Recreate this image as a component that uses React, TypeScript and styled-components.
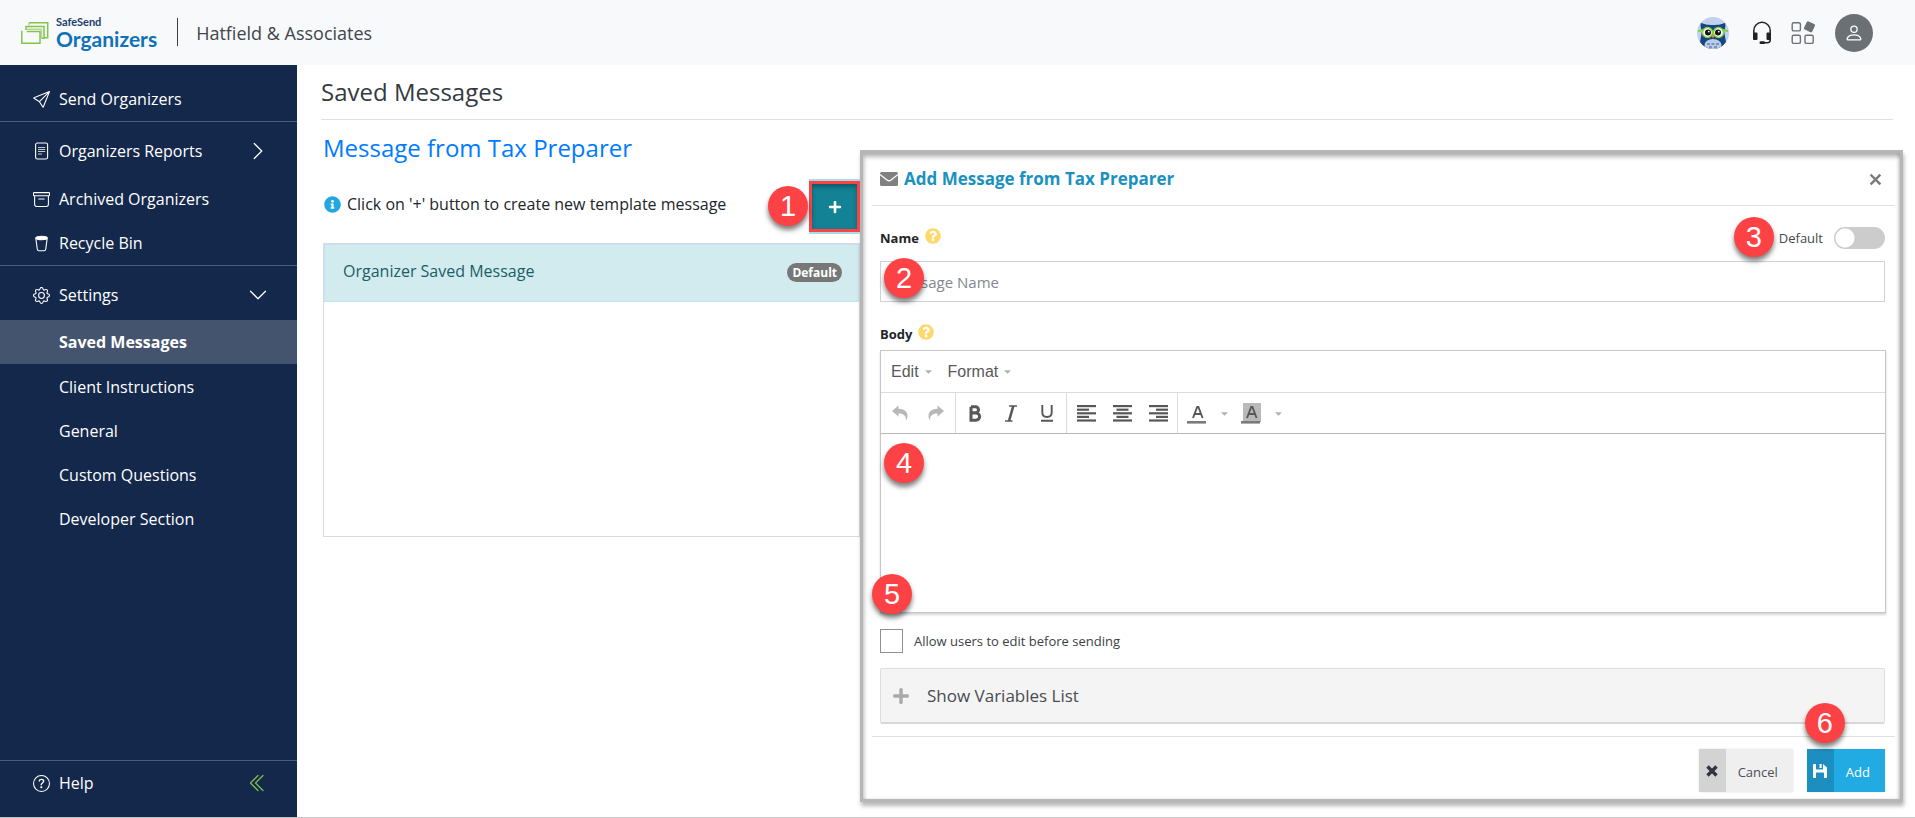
import React, { useState } from "react";
import styled, { createGlobalStyle, css } from "styled-components";
import {
  BsArchive,
  BsChevronDoubleLeft,
  BsChevronDown,
  BsChevronRight,
  BsGear,
  BsPerson,
  BsQuestionCircle,
  BsSend,
} from "react-icons/bs";
import { FaInfoCircle, FaPlus, FaQuestionCircle, FaCaretDown } from "react-icons/fa";

const GlobalStyle = createGlobalStyle`
  *, *::before, *::after { box-sizing: border-box; }
  body {
    margin: 0;
    background: #fff;
    color: #212529;
    font-family: "Open Sans", "Noto Sans", "Liberation Sans", sans-serif;
    font-size: 16px;
    line-height: 24px;
  }
  button, input, textarea { font: inherit; color: inherit; }
  h1, h2, h3, p, ul { margin: 0; padding: 0; }
  ul { list-style: none; }
  svg { display: block; flex: none; }
`;

const plainButton = css`
  margin: 0;
  padding: 0;
  border: 0;
  background: none;
  cursor: pointer;
`;

/* ---------- Page frame ---------- */

const Page = styled.div`
  display: flex;
  flex-direction: column;
  min-height: 100vh;
  border-bottom: 1px solid #c4c4c4;
`;

const TopBar = styled.header`
  display: flex;
  align-items: center;
  height: 65px;
  padding: 0 42px 0 20px;
  background: #f8f9fb;
`;

const Brand = styled.a`
  display: flex;
  align-items: center;
  gap: 6px;
  padding-right: 20px;
  text-decoration: none;
`;

const BrandName = styled.span`
  display: flex;
  flex-direction: column;
  font-family: Lato, "Open Sans", sans-serif;
`;

const BrandParent = styled.span`
  color: #16406d;
  font-size: 11px;
  font-weight: 700;
  line-height: 12px;
`;

const BrandProduct = styled.span`
  color: #0f72b9;
  font-size: 21px;
  font-weight: 700;
  line-height: 22px;
`;

const FirmName = styled.span`
  display: flex;
  align-items: center;
  gap: 18px;
  color: #40464c;
  font-size: 18px;

  &::before {
    content: "";
    width: 1px;
    height: 28px;
    margin-top: -2px;
    background: #3a3f44;
  }
`;

const TopActions = styled.div`
  display: flex;
  align-items: center;
  margin-left: auto;
`;

const TopButton = styled.button<{ $gap?: number }>`
  ${plainButton}
  margin-left: ${(p) => p.$gap ?? 0}px;
`;

const Avatar = styled(TopButton)`
  display: grid;
  place-items: center;
  width: 38px;
  height: 38px;
  border-radius: 50%;
  background: #6b7075;
  color: #fff;
`;

const Columns = styled.div`
  display: flex;
  flex: 1;
`;

/* ---------- Sidebar ---------- */

const Sidebar = styled.nav`
  display: flex;
  flex: none;
  flex-direction: column;
  width: 297px;
  background: #14284b;
  color: #fff;
`;

const NavSection = styled.ul<{ $top: number }>`
  padding-top: ${(p) => p.$top}px;
  border-bottom: 1px solid #4b5c78;
`;

const SettingsSection = styled.div`
  padding-top: 7px;
`;

const HelpSection = styled.div`
  margin-top: auto;
  padding-bottom: 12px;
  border-top: 1px solid #4b5c78;
`;

const NavLink = styled.a<{ $spaced?: boolean }>`
  display: flex;
  align-items: center;
  gap: 9px;
  height: 44px;
  margin-bottom: ${(p) => (p.$spaced ? 4 : 0)}px;
  padding: 0 29px 0 33px;
  color: inherit;
  text-decoration: none;

  svg:last-child:not(:first-child) { margin-left: auto; }
`;

const SubLink = styled.a<{ $active?: boolean }>`
  display: flex;
  align-items: center;
  height: 44px;
  padding: 0 29px 0 59px;
  color: inherit;
  text-decoration: none;
  ${(p) =>
    p.$active &&
    css`
      margin: 3px 0 1px;
      background: #44546f;
      font-weight: 700;
    `}
`;

/* ---------- Main area ---------- */

const Main = styled.main`
  flex: 1;
  min-width: 0;
`;

const PageTitle = styled.h1`
  margin: 0 22px 0 24px;
  border-bottom: 1px solid #dfe1e3;
  color: #343a40;
  font-size: 24px;
  font-weight: 500;
  line-height: 54px;
`;

const Workspace = styled.div`
  display: flex;
  align-items: flex-start;
  padding: 0 12px 0 24px;
`;

const TemplatePanel = styled.section`
  flex: 0 0 539px;
  padding: 12px 0 0 2px;
`;

const PanelTitle = styled.h2`
  color: #007bff;
  font-size: 24px;
  font-weight: 500;
  line-height: 32px;
`;

const HintRow = styled.div`
  display: flex;
  align-items: center;
  justify-content: space-between;
  margin: 15px 0 9px;
`;

const Hint = styled.p`
  display: flex;
  align-items: center;
  gap: 6px;
  padding-left: 1px;
  margin-bottom: 5px;

  svg { color: #22a7e0; }
`;

const AddTemplate = styled.div`
  position: relative;
  border: solid #a9dbe2;
  border-width: 2px 0;
`;

const AddTemplateButton = styled.button`
  ${plainButton}
  display: grid;
  place-items: center;
  width: 51px;
  height: 51px;
  border: 3px solid #fb4246;
  background: #128294;
  box-shadow: inset 0 3px 4px rgba(0, 0, 0, 0.3);
  color: #fff;
`;

const TemplateList = styled.ul`
  min-height: 294px;
  border: 1px solid #d9dbdc;
`;

const TemplateItem = styled.li`
  display: flex;
  align-items: flex-start;
  justify-content: space-between;
  height: 58px;
  padding: 14px 16px 0 18px;
  border: 1px dotted #b8daff;
  background: #d1ebee;
  color: #1b5e67;
`;

const Pill = styled.span`
  margin-top: 4px;
  padding: 0 5px;
  border-radius: 10px;
  background: #777;
  color: #fff;
  font-size: 12px;
  font-weight: 700;
  line-height: 19px;
`;

/* ---------- Dialog ---------- */

const Dialog = styled.section`
  flex: 1;
  min-width: 0;
  margin-top: 30px;
  padding: 0 5px 0 9px;
  border: 3px solid #b6b6b6;
  background: #fff;
  box-shadow: 1px 4px 4px rgba(0, 0, 0, 0.28), inset 1px 4px 4px rgba(0, 0, 0, 0.28),
    inset -2px 0 3px rgba(0, 0, 0, 0.14);
`;

const DialogHeader = styled.header`
  display: flex;
  align-items: center;
  gap: 6px;
  height: 53px;
  padding: 0 13px 0 8px;
  border-bottom: 1px solid #dfe0e1;
`;

const DialogTitle = styled.h3`
  flex: 1;
  color: #1b91c0;
  font-size: 17px;
  font-weight: 700;
`;

const IconButton = styled.button`
  ${plainButton}
  color: #7a7a7a;
`;

const DialogBody = styled.div`
  padding: 18px 10px 12px 8px;
`;

const LabelRow = styled.div`
  display: flex;
  align-items: center;
  gap: 6px;
  height: 28px;
`;

const FieldLabel = styled.label`
  font-size: 13px;
  font-weight: 700;
`;

const HelpButton = styled.button`
  ${plainButton}
  margin-bottom: 5px;
  color: #ffd86b;
`;

const DefaultToggle = styled.label`
  position: relative;
  display: flex;
  align-items: center;
  gap: 11px;
  margin-left: auto;
  color: #43484d;
  font-size: 13px;
`;

const Switch = styled.input`
  appearance: none;
  width: 51px;
  height: 22px;
  margin: 0;
  border-radius: 11px;
  background: radial-gradient(circle at 11px 11px, #fff 9px, transparent 10px), #ccc;
  cursor: pointer;

  &:checked {
    background: radial-gradient(circle at 40px 11px, #fff 9px, transparent 10px), #22aae3;
  }
`;

const NameField = styled.div`
  position: relative;
  margin: 9px 0 18px;
`;

const TextInput = styled.input`
  display: block;
  width: 100%;
  height: 41px;
  padding: 0 11px;
  border: 1px solid #cfd2d6;
  border-radius: 0;
  background: #fff;
  font-size: 15px;

  &::placeholder { color: #82888e; opacity: 1; }
`;

const Editor = styled.div`
  margin: 2px -1px 0 0;
  border: 1px solid #c6c6c6;
  box-shadow: 0 2px 2px rgba(0, 0, 0, 0.16);
`;

const MenuBar = styled.div`
  display: flex;
  align-items: center;
  gap: 14px;
  height: 42px;
  padding: 0 10px;
  border-bottom: 1px solid #dcdcdc;
`;

const MenuButton = styled.button`
  ${plainButton}
  display: flex;
  align-items: center;
  gap: 4px;
  color: #595959;
  font-family: "Liberation Sans", Arial, sans-serif;
  font-size: 16px;

  svg { color: #aeb3b8; }
`;

const ToolBar = styled.div`
  display: flex;
  height: 41px;
  border-bottom: 1px solid #b9b9b9;
`;

const ToolGroup = styled.div`
  display: flex;
  align-items: center;
  padding: 0 1px;

  & + & { border-left: 1px solid #dcdcdc; }
`;

const ToolButton = styled.button<{ $dim?: boolean; $narrow?: boolean }>`
  ${plainButton}
  display: grid;
  place-items: center;
  width: ${(p) => (p.$narrow ? 18 : 36)}px;
  height: 36px;
  color: ${(p) => (p.$dim ? "#b8b8b8" : "#585858")};
`;

const EditArea = styled.div`
  position: relative;
`;

const EditText = styled.textarea`
  display: block;
  width: 100%;
  height: 178px;
  padding: 8px;
  border: 0;
  outline: 0;
  background: transparent;
  resize: none;
`;

const AllowRow = styled.div`
  position: relative;
  display: flex;
  align-items: center;
  gap: 11px;
  height: 24px;
  margin: 16px 0 15px;
`;

const TickBox = styled.input`
  appearance: none;
  width: 23px;
  height: 24px;
  margin: 0;
  border: 1px solid #8d9093;
  background: #fff;

  &:checked { background: #22aae3; }
`;

const AllowLabel = styled.label`
  color: #3c4146;
  font-size: 13px;
`;

const VariablesButton = styled.button`
  ${plainButton}
  display: flex;
  align-items: center;
  gap: 17px;
  width: 100%;
  height: 56px;
  padding: 0 11px;
  border: 1px solid #dedede;
  border-bottom: 2px solid #d8d8d8;
  border-radius: 2px;
  background: #f4f4f4;
  color: #484c50;
  font-size: 17px;

  svg { color: #a9a9a9; }
`;

const DialogFooter = styled.footer`
  display: flex;
  justify-content: flex-end;
  gap: 14px;
  padding: 12px 10px 7px;
  border-top: 1px solid #dfe0e1;
`;

const FooterAction = styled.div`
  position: relative;
`;

const ActionButton = styled.button<{ $primary?: boolean }>`
  ${plainButton}
  display: flex;
  align-items: center;
  height: 43px;
  background: ${(p) => (p.$primary ? "#22aae3" : "#efefef")};
  color: ${(p) => (p.$primary ? "#fff" : "#4a4f5a")};
  font-size: 13px;
  box-shadow: 0 0 2px rgba(0, 0, 0, 0.12);
`;

const ActionIcon = styled.span<{ $primary?: boolean }>`
  display: grid;
  place-items: center;
  width: 27px;
  height: 43px;
  background: ${(p) => (p.$primary ? "#1c8ebf" : "#d3d3d3")};
  color: ${(p) => (p.$primary ? "#fff" : "#2f3542")};
`;

const ActionText = styled.span`
  padding: 2px 15px 0 12px;
`;

const StepMarker = styled.span<{ $left: number; $top: number }>`
  position: absolute;
  z-index: 2;
  left: ${(p) => p.$left}px;
  top: ${(p) => p.$top}px;
  width: 40px;
  height: 40px;
  border-radius: 50%;
  background: #fd4246;
  box-shadow: 0 4px 5px rgba(0, 0, 0, 0.5);
  color: #fff;
  font-family: "Liberation Sans", Arial, sans-serif;
  font-size: 29px;
  font-weight: 400;
  line-height: 41px;
  text-align: center;
`;

/* ---------- Drawings ---------- */

const LogoMark = () => (
  <svg width="30" height="24" viewBox="0 0 30 24" fill="none" stroke="#86c34d" strokeWidth="1.500" aria-hidden="true">
    <path d="M1.800 9.800v12.400h18.200v-11.600H6.800" />
    <path d="M6 9V5.500h18v11.800h-2.500" />
    <path d="M6 8.300h15.500v9" opacity="0.600" />
    <path d="M8.800 1.800h18.900v15H24" />
    <path d="M9 4.500V1.800" opacity="0.500" />
  </svg>
);

const Owl = () => (
  <svg width="34" height="34" viewBox="0 0 34 34" aria-hidden="true">
    <defs>
      <clipPath id="owl-clip"><circle cx="17" cy="17" r="16" /></clipPath>
    </defs>
    <circle cx="17" cy="17" r="16" fill="#c3d0ee" />
    <g clipPath="url(#owl-clip)">
      <path d="M5 7c3 1 6 2 12 2s9-1 12-2c1 3 0 6-1 8l2 11-6 8H10l-6-8 2-11C5 13 4 10 5 7z" fill="#17457f" />
      <ellipse cx="17" cy="29" rx="8.500" ry="6" fill="#bccbe4" />
      <path d="M11 28h3M15.500 28h3M20 28h3M13 31h3M18 31h3" stroke="#365f94" strokeWidth="1" />
      <path d="M2 15l5-1M32 15l-5-1" stroke="#83cf3f" strokeWidth="2" />
      <circle cx="11.500" cy="16.500" r="5" fill="#fff" stroke="#83cf3f" strokeWidth="1.500" />
      <circle cx="22.500" cy="16.500" r="5" fill="#fff" stroke="#83cf3f" strokeWidth="1.500" />
      <circle cx="12" cy="16.500" r="3" fill="#151515" />
      <circle cx="22" cy="16.500" r="3" fill="#151515" />
      <circle cx="12.800" cy="15.600" r="0.900" fill="#fff" />
      <circle cx="22.800" cy="15.600" r="0.900" fill="#fff" />
      <path d="M15.300 19h3.400L17 22.500z" fill="#ee8a2c" />
    </g>
  </svg>
);

const Headset = () => (
  <svg width="20" height="24" viewBox="0 0 20 24" fill="none" aria-hidden="true">
    <path d="M1.800 14V9.500a8.200 8.200 0 0 1 16.400 0V19c0 1.800-1 2.700-3 2.700h-4" stroke="#1f2225" strokeWidth="1.500" />
    <rect x="1" y="11.500" width="4.500" height="7.500" rx="1" fill="#1f2225" />
    <rect x="14.500" y="11.500" width="4.500" height="7.500" rx="1" fill="#1f2225" />
    <rect x="7.500" y="20.300" width="5.500" height="2.700" rx="1.300" fill="#1f2225" />
  </svg>
);

const AppsGrid = () => (
  <svg width="24" height="24" viewBox="0 0 24 24" fill="none" stroke="#6c7176" strokeWidth="1.400" aria-hidden="true">
    <rect x="1.200" y="1.700" width="8.200" height="8.200" rx="1.500" />
    <rect x="1.200" y="14.200" width="8.200" height="8.200" rx="1.500" />
    <rect x="14" y="14.200" width="8.200" height="8.200" rx="1.500" />
    <rect x="14" y="1.300" width="9" height="9" rx="1.500" fill="#6c7176" stroke="none" transform="rotate(25 18.500 5.800)" />
  </svg>
);

const ReportIcon = () => (
  <svg width="17" height="18" viewBox="0 0 17 18" fill="none" stroke="#fff" aria-hidden="true">
    <rect x="2.600" y="1" width="12" height="16" rx="1.800" strokeWidth="1.100" />
    <path d="M5 5.500h7.200M5 7.500h7.200M5 9.500h7.200M5 12h4" strokeWidth="1.100" opacity="0.750" />
  </svg>
);

const BinIcon = () => (
  <svg width="17" height="17" viewBox="0 0 17 17" fill="none" stroke="#fff" strokeWidth="1.100" aria-hidden="true">
    <path d="M2.800 3.200l1.500 11c.1.900.7 1.500 1.600 1.500h5.200c.9 0 1.500-.6 1.600-1.500l1.500-11" />
    <ellipse cx="8.500" cy="3" rx="5.800" ry="1.700" fill="#fff" />
  </svg>
);

const Envelope = () => (
  <svg width="18" height="14" viewBox="0 0 18 14" aria-hidden="true">
    <rect width="18" height="14" rx="1.500" fill="#808080" />
    <path d="M0 2.500c3 2.500 5 4 7 5.500 1.300 1 2.700 1 4 0 2-1.500 4-3 7-5.500" fill="none" stroke="#fff" strokeWidth="1.300" />
  </svg>
);

const Cross = ({ size, weight }: { size: number; weight: number }) => (
  <svg width={size} height={size} viewBox="0 0 12 12" fill="none" stroke="currentColor" strokeWidth={weight} aria-hidden="true">
    <path d="M1.500 1.500l9 9M10.500 1.500l-9 9" />
  </svg>
);

const Floppy = () => (
  <svg width="14" height="14" viewBox="0 0 14 14" fill="currentColor" aria-hidden="true">
    <path d="M0 1a1 1 0 0 1 1-1h2v4.500c0 .6.400 1 1 1h5c.6 0 1-.400 1-1V0l4 3.500V13a1 1 0 0 1-1 1h-2V9.500c0-.6-.4-1-1-1H4c-.6 0-1 .4-1 1V14H1a1 1 0 0 1-1-1z" />
    <rect x="6.500" y="0" width="2.200" height="4" />
  </svg>
);

const UndoArrow = ({ flip }: { flip?: boolean }) => (
  <svg width="16" height="16" viewBox="0 0 16 16" fill="currentColor" aria-hidden="true">
    <path
      transform={flip ? "translate(16 0) scale(-1 1)" : undefined}
      d="M0 6l6.500-5.500v3.300C12 4 15.500 6.500 15.500 11c0 1.800-.6 3.300-1.700 4.500.6-4.300-1.800-7-7.300-7v3.200z"
    />
  </svg>
);

const BoldIcon = () => (
  <svg width="14" height="17" viewBox="0 0 14 17" fill="none" stroke="currentColor" strokeWidth="3" aria-hidden="true">
    <path d="M3 1.800h4.500a2.900 2.900 0 0 1 0 6H3M3 8h5a3.400 3.400 0 0 1 0 7.200H3V1.800" />
  </svg>
);

const ItalicIcon = () => (
  <svg width="14" height="17" viewBox="0 0 14 17" fill="none" stroke="currentColor" aria-hidden="true">
    <path d="M5 1h8M1 16h7.500" strokeWidth="1.400" />
    <path d="M9.300 1L5 16" strokeWidth="2.600" />
  </svg>
);

const UnderlineIcon = () => (
  <svg width="14" height="17" viewBox="0 0 14 17" fill="none" stroke="currentColor" strokeWidth="1.900" aria-hidden="true">
    <path d="M2.300 0v7.500c0 3 2 4.500 4.700 4.500s4.700-1.500 4.700-4.500V0M1 15.800h12" />
  </svg>
);

const AlignIcon = ({ side }: { side: "left" | "center" | "right" }) => {
  const start = (width: number) => (side === "left" ? 0 : side === "right" ? 19 - width : (19 - width) / 2);
  return (
    <svg width="19" height="17" viewBox="0 0 19 17" fill="currentColor" aria-hidden="true">
      {[19, 12, 19, 12, 19].map((width, i) => (
        <rect key={i} x={start(width)} y={i * 3.600} width={width} height="2.200" />
      ))}
    </svg>
  );
};

const ColourIcon = ({ filled }: { filled?: boolean }) => (
  <svg width="20" height="21" viewBox="0 0 20 21" fill="none" stroke="currentColor" aria-hidden="true">
    {filled && <rect x="2" y="0" width="18" height="19" fill="#b9b9b9" stroke="none" />}
    <path d="M6 15l4.200-11h1.200l4.200 11M7.500 11h6.500" strokeWidth="1.900" />
    <rect x="0" y="18" width="19" height="2.600" fill="#7b7b7b" stroke="none" />
  </svg>
);

/* ---------- Content ---------- */

const settingsPages = [
  "Saved Messages",
  "Client Instructions",
  "General",
  "Custom Questions",
  "Developer Section",
];

const SideNavigation = () => (
  <Sidebar aria-label="Main">
    <NavSection $top={12}>
      <li><NavLink href="#send"><BsSend size={17} />Send Organizers</NavLink></li>
    </NavSection>
    <NavSection $top={7}>
      <li>
        <NavLink href="#reports" $spaced>
          <ReportIcon />Organizers Reports<BsChevronRight size={20} />
        </NavLink>
      </li>
      <li><NavLink href="#archived"><BsArchive size={17} />Archived Organizers</NavLink></li>
      <li><NavLink href="#bin"><BinIcon />Recycle Bin</NavLink></li>
    </NavSection>
    <SettingsSection>
      <NavLink href="#settings"><BsGear size={17} />Settings<BsChevronDown size={20} /></NavLink>
      <ul>
        {settingsPages.map((name, i) => (
          <li key={name}>
            <SubLink href="#settings" $active={i === 0} aria-current={i === 0 ? "page" : undefined}>{name}</SubLink>
          </li>
        ))}
      </ul>
    </SettingsSection>
    <HelpSection>
      <NavLink href="#help">
        <BsQuestionCircle size={17} />Help
        <BsChevronDoubleLeft size={20} color="#7cc04b" />
      </NavLink>
    </HelpSection>
  </Sidebar>
);

const MessageDialog = () => {
  const [isDefault, setIsDefault] = useState(false);
  const [allowEdit, setAllowEdit] = useState(false);

  return (
    <Dialog role="dialog" aria-labelledby="dialog-title">
      <DialogHeader>
        <Envelope />
        <DialogTitle id="dialog-title">Add Message from Tax Preparer</DialogTitle>
        <IconButton type="button" aria-label="Close"><Cross size={13} weight={2.2} /></IconButton>
      </DialogHeader>

      <DialogBody>
        <LabelRow>
          <FieldLabel htmlFor="message-name">Name</FieldLabel>
          <HelpButton type="button" aria-label="About the name"><FaQuestionCircle size={16} /></HelpButton>
          <DefaultToggle>
            <StepMarker $left={-45} $top={-9}>3</StepMarker>
            Default
            <Switch type="checkbox" checked={isDefault} onChange={() => setIsDefault(!isDefault)} />
          </DefaultToggle>
        </LabelRow>
        <NameField>
          <TextInput id="message-name" type="text" placeholder="Message Name" />
          <StepMarker $left={4} $top={-3}>2</StepMarker>
        </NameField>

        <LabelRow>
          <FieldLabel htmlFor="message-body">Body</FieldLabel>
          <HelpButton type="button" aria-label="About the body"><FaQuestionCircle size={16} /></HelpButton>
        </LabelRow>
        <Editor>
          <MenuBar>
            <MenuButton type="button">Edit<FaCaretDown size={11} /></MenuButton>
            <MenuButton type="button">Format<FaCaretDown size={11} /></MenuButton>
          </MenuBar>
          <ToolBar>
            <ToolGroup>
              <ToolButton type="button" aria-label="Undo" $dim><UndoArrow /></ToolButton>
              <ToolButton type="button" aria-label="Redo" $dim><UndoArrow flip /></ToolButton>
            </ToolGroup>
            <ToolGroup>
              <ToolButton type="button" aria-label="Bold"><BoldIcon /></ToolButton>
              <ToolButton type="button" aria-label="Italic"><ItalicIcon /></ToolButton>
              <ToolButton type="button" aria-label="Underline"><UnderlineIcon /></ToolButton>
            </ToolGroup>
            <ToolGroup>
              <ToolButton type="button" aria-label="Align left"><AlignIcon side="left" /></ToolButton>
              <ToolButton type="button" aria-label="Align centre"><AlignIcon side="center" /></ToolButton>
              <ToolButton type="button" aria-label="Align right"><AlignIcon side="right" /></ToolButton>
            </ToolGroup>
            <ToolGroup>
              <ToolButton type="button" aria-label="Text colour"><ColourIcon /></ToolButton>
              <ToolButton type="button" aria-label="Text colours" $narrow><FaCaretDown size={11} color="#aeb3b8" /></ToolButton>
              <ToolButton type="button" aria-label="Background colour"><ColourIcon filled /></ToolButton>
              <ToolButton type="button" aria-label="Background colours" $narrow><FaCaretDown size={11} color="#aeb3b8" /></ToolButton>
            </ToolGroup>
          </ToolBar>
          <EditArea>
            <EditText id="message-body" />
            <StepMarker $left={3} $top={9}>4</StepMarker>
          </EditArea>
        </Editor>

        <AllowRow>
          <StepMarker $left={-8} $top={-55}>5</StepMarker>
          <TickBox id="allow-edit" type="checkbox" checked={allowEdit} onChange={() => setAllowEdit(!allowEdit)} />
          <AllowLabel htmlFor="allow-edit">Allow users to edit before sending</AllowLabel>
        </AllowRow>

        <VariablesButton type="button" aria-expanded="false">
          <FaPlus size={18} />Show Variables List
        </VariablesButton>
      </DialogBody>

      <DialogFooter>
        <FooterAction>
          <ActionButton type="button">
            <ActionIcon><Cross size={12} weight={3.4} /></ActionIcon>
            <ActionText>Cancel</ActionText>
          </ActionButton>
        </FooterAction>
        <FooterAction>
          <ActionButton type="button" $primary>
            <ActionIcon $primary><Floppy /></ActionIcon>
            <ActionText>Add</ActionText>
          </ActionButton>
          <StepMarker $left={-2} $top={-46}>6</StepMarker>
        </FooterAction>
      </DialogFooter>
    </Dialog>
  );
};

export default function App() {
  return (
    <>
      <GlobalStyle />
      <Page>
        <TopBar>
          <Brand href="#home">
            <LogoMark />
            <BrandName>
              <BrandParent>SafeSend</BrandParent>
              <BrandProduct>Organizers</BrandProduct>
            </BrandName>
          </Brand>
          <FirmName>Hatfield &amp; Associates</FirmName>
          <TopActions>
            <TopButton type="button" aria-label="Assistant"><Owl /></TopButton>
            <TopButton type="button" aria-label="Support" $gap={22}><Headset /></TopButton>
            <TopButton type="button" aria-label="Apps" $gap={19}><AppsGrid /></TopButton>
            <Avatar type="button" aria-label="Account" $gap={20}><BsPerson size={20} /></Avatar>
          </TopActions>
        </TopBar>
        <Columns>
          <SideNavigation />
          <Main>
            <PageTitle>Saved Messages</PageTitle>
            <Workspace>
              <TemplatePanel>
                <PanelTitle>Message from Tax Preparer</PanelTitle>
                <HintRow>
                  <Hint><FaInfoCircle size={17} />Click on '+' button to create new template message</Hint>
                  <AddTemplate>
                    <AddTemplateButton type="button" aria-label="Create message"><FaPlus size={14} /></AddTemplateButton>
                    <StepMarker $left={-41} $top={5}>1</StepMarker>
                  </AddTemplate>
                </HintRow>
                <TemplateList>
                  <TemplateItem>Organizer Saved Message<Pill>Default</Pill></TemplateItem>
                </TemplateList>
              </TemplatePanel>
              <MessageDialog />
            </Workspace>
          </Main>
        </Columns>
      </Page>
    </>
  );
}
